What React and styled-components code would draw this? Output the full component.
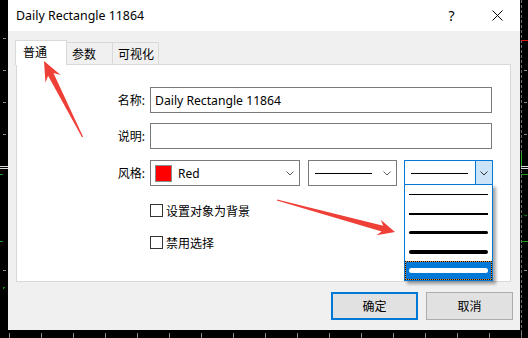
import React from 'react';
import styled, { createGlobalStyle } from 'styled-components';

const Global = createGlobalStyle`
  html, body { margin: 0; padding: 0; background: #000; }
  body {
    font-family: "Segoe UI", "Noto Sans", "Noto Sans CJK SC", sans-serif;
    font-size: 12px;
    color: #000;
  }
  #root { width: 528px; height: 338px; overflow: hidden; }
`;

const Page = styled.div`
  position: relative;
  width: 528px;
  height: 338px;
  display: grid;
  grid-template-columns: 8px 512px 8px;
  grid-template-rows: 330px 8px;
  background: #000;
  overflow: hidden;
`;

const Rail = styled.svg`
  display: block;
  grid-column: ${(p) => p.$col};
`;

const Dialog = styled.div`
  display: flex;
  flex-direction: column;
  background: #f0f0f0;
  overflow: hidden;
`;

const TitleBar = styled.div`
  height: 31px;
  flex: none;
  background: #fff;
  display: flex;
  align-items: center;
`;

const Title = styled.div`
  flex: 1;
  padding-left: 8px;
  font-size: 12.4px;
  white-space: nowrap;
`;

const TitleButton = styled.div`
  width: ${(p) => p.$w}px;
  height: 31px;
  display: flex;
  align-items: center;
  justify-content: center;
  font-size: 14px;
`;

const Body = styled.div`
  flex: 1;
  display: flex;
  flex-direction: column;
  padding-top: 9px;
`;

const TabStrip = styled.div`
  height: 24px;
  display: flex;
  align-items: flex-start;
  padding-left: 7px;
  position: relative;
  z-index: 2;
`;

const Tab = styled.div`
  box-sizing: border-box;
  width: ${(p) => p.$w}px;
  height: ${(p) => (p.$active ? 25 : 22)}px;
  margin-top: ${(p) => (p.$active ? 0 : 2)}px;
  margin-left: ${(p) => (p.$first ? 0 : -1)}px;
  border: 1px solid #d9d9d9;
  border-bottom: none;
  background: ${(p) => (p.$active ? '#fff' : '#f0f0f0')};
  padding-left: ${(p) => (p.$active ? 7 : 5)}px;
  padding-bottom: ${(p) => (p.$active ? 2 : 0)}px;
  display: flex;
  align-items: center;
  position: relative;
  z-index: ${(p) => (p.$active ? 2 : 1)};
  font-size: 12px;
`;

const Panel = styled.div`
  box-sizing: border-box;
  margin: 0 9px 0 8px;
  height: 218px;
  flex: none;
  border: 1px solid #d9d9d9;
  background: #fff;
  display: flex;
  flex-direction: column;
  position: relative;
  z-index: 1;
`;

const Row = styled.div`
  display: flex;
  align-items: center;
  height: ${(p) => p.$h}px;
  margin-top: ${(p) => p.$mt}px;
  flex: none;
`;

const Label = styled.div`
  width: 128px;
  margin-right: 5px;
  text-align: right;
  flex: none;
  font-size: 12px;
`;

const TextBox = styled.div`
  box-sizing: border-box;
  width: 342px;
  height: 100%;
  border: 1px solid #7a7a7a;
  padding-left: 4px;
  display: flex;
  align-items: center;
  background: #fff;
  white-space: nowrap;
  font-size: 12.2px;
`;

const Combos = styled.div`
  display: flex;
  height: 100%;
`;

const Combo = styled.div`
  box-sizing: border-box;
  width: ${(p) => p.$w}px;
  margin-left: ${(p) => p.$ml || 0}px;
  height: 100%;
  border: 1px solid ${(p) => (p.$focus ? '#0078d7' : '#7a7a7a')};
  background: #fff;
  display: flex;
  align-items: center;
  position: relative;
`;

const ComboValue = styled.div`
  flex: 1;
  display: flex;
  align-items: center;
  padding-left: ${(p) => p.$pl}px;
  height: 100%;
`;

const Swatch = styled.div`
  box-sizing: border-box;
  width: 17px;
  height: 17px;
  background: #ff0000;
  border: 1px solid #8c8c8c;
  margin-right: 6px;
`;

const LineSample = styled.div`
  width: 57px;
  height: 1px;
  background: #000;
`;

const ArrowCell = styled.div`
  width: ${(p) => p.$w}px;
  height: 100%;
  flex: none;
  display: flex;
  align-items: center;
  justify-content: center;
  background: ${(p) => (p.$open ? '#cce4f7' : 'transparent')};
  border-left: ${(p) => (p.$open ? '1px solid #0078d7' : 'none')};
  box-sizing: border-box;
`;

const DropList = styled.div`
  position: absolute;
  left: -1px;
  right: -1px;
  top: calc(100% - 1px);
  box-sizing: border-box;
  border: 1px solid #0078d7;
  background: #fff;
  box-shadow: 3px 3px 3px rgba(0, 0, 0, 0.35);
  z-index: 5;
  display: flex;
  flex-direction: column;
`;

const DropItem = styled.div`
  height: 19px;
  display: flex;
  align-items: center;
  padding: 0 4px;
  box-sizing: border-box;
  background: ${(p) => (p.$sel ? '#0078d7' : '#fff')};
  box-shadow: ${(p) => (p.$sel ? 'inset 0 0 0 1px #e8912c' : 'none')};
  outline: ${(p) => (p.$sel ? '1px dotted #111' : 'none')};
  outline-offset: -1px;
`;

const DropLine = styled.div`
  flex: 1;
  height: ${(p) => p.$t}px;
  border-radius: ${(p) => (p.$t > 2 ? p.$t / 2 : 0)}px;
  background: ${(p) => (p.$sel ? '#fff' : '#000')};
`;

const CheckRow = styled.label`
  display: flex;
  align-items: center;
  height: 13px;
  margin-top: ${(p) => p.$mt}px;
  margin-left: 133px;
  font-size: 12px;
  flex: none;
`;

const CheckBox = styled.span`
  box-sizing: border-box;
  width: 13px;
  height: 13px;
  border: 1px solid #333;
  background: #fff;
  margin-right: 3px;
  flex: none;
`;

const ButtonRow = styled.div`
  display: flex;
  justify-content: flex-end;
  gap: 8px;
  padding-right: 7px;
  margin-top: 10px;
`;

const Button = styled.div`
  box-sizing: border-box;
  width: 87px;
  height: 28px;
  background: #e1e1e1;
  border: ${(p) => (p.$primary ? '2px solid #0078d7' : '1px solid #adadad')};
  display: flex;
  align-items: center;
  justify-content: center;
  font-size: 12px;
`;

const Overlay = styled.svg`
  position: absolute;
  left: 0;
  top: 0;
  pointer-events: none;
  z-index: 20;
`;

const Chevron = ({ color = '#606060' }) => (
  <svg width="8" height="5" viewBox="0 0 8 5">
    <polyline points="0.5,0.5 4,4 7.5,0.5" fill="none" stroke={color} strokeWidth="1" />
  </svg>
);

function arrowPoints(tx, ty, px, py, hl, hw, nw, nb) {
  const dx = px - tx;
  const dy = py - ty;
  const L = Math.hypot(dx, dy);
  const ux = dx / L;
  const uy = dy / L;
  const nx = -uy;
  const ny = ux;
  const pt = (s, t) => `${(tx + ux * s + nx * t).toFixed(2)},${(ty + uy * s + ny * t).toFixed(2)}`;
  return [pt(0, 0.6), pt(L - nb, nw), pt(L - hl, hw), pt(L, 0), pt(L - hl, -hw), pt(L - nb, -nw), pt(0, -0.6)].join(' ');
}

const LeftRailArt = () => (
  <Rail $col="1" width="8" height="330" viewBox="0 0 8 330">
    {[38, 70, 102, 134, 270].map((y) => (
      <line key={y} x1="3" x2="6" y1={y + 0.5} y2={y + 0.5} stroke="#8a8a8a" />
    ))}
    <line x1="0" x2="8" y1="166.5" y2="166.5" stroke="#dcdcdc" />
    <line x1="0" x2="8" y1="168.5" y2="168.5" stroke="#dcdcdc" />
    <line x1="0" x2="3" y1="174.5" y2="174.5" stroke="#1d9a1d" />
    <line x1="0" x2="3" y1="241.5" y2="241.5" stroke="#1d9a1d" />
    <polyline points="3.5,289 3.5,287.5 5,287.5" fill="none" stroke="#1d9a1d" />
  </Rail>
);

const RightRailArt = () => (
  <Rail $col="3" width="8" height="330" viewBox="0 0 8 330">
    <line x1="1.5" x2="1.5" y1="0" y2="330" stroke="#6f6f6f" strokeDasharray="3 2" />
    {[70, 102, 134, 270].map((y) => (
      <line key={y} x1="4" x2="7" y1={y + 0.5} y2={y + 0.5} stroke="#8a8a8a" />
    ))}
    <line x1="1" x2="8" y1="40.5" y2="40.5" stroke="#e01010" />
    <line x1="1.5" x2="1.5" y1="153" y2="166" stroke="#1fae1f" />
    <line x1="1" x2="8" y1="166.5" y2="166.5" stroke="#dcdcdc" />
    <line x1="1" x2="8" y1="168.5" y2="168.5" stroke="#dcdcdc" />
    <line x1="1" x2="8" y1="174.5" y2="174.5" stroke="#1d9a1d" />
    <polyline points="4,214.5 5.5,216 7,215" fill="none" stroke="#1d9a1d" />
    <line x1="1" x2="8" y1="241.5" y2="241.5" stroke="#1d9a1d" />
  </Rail>
);

const BottomRailArt = () => {
  const xs = [];
  for (let x = 9; x < 528; x += 32) xs.push(x);
  return (
    <Rail $col="1 / 4" width="528" height="8" viewBox="0 0 528 8">
      {xs.map((x) => (
        <line key={x} x1={x + 0.5} x2={x + 0.5} y1="3" y2="8" stroke="#8a8a8a" />
      ))}
      <line x1="521.5" x2="521.5" y1="0" y2="8" stroke="#6f6f6f" strokeDasharray="3 2" />
    </Rail>
  );
};

export default function App() {
  const thickness = [1, 2, 3, 4, 5];
  return (
    <>
      <Global />
      <Page>
        <LeftRailArt />
        <Dialog>
          <TitleBar>
            <Title>Daily Rectangle 11864</Title>
            <TitleButton $w={45}>?</TitleButton>
            <TitleButton $w={46}>
              <svg width="11" height="11" viewBox="0 0 11 11">
                <line x1="0.5" y1="0.5" x2="10.5" y2="10.5" stroke="#000" strokeWidth="1" />
                <line x1="10.5" y1="0.5" x2="0.5" y2="10.5" stroke="#000" strokeWidth="1" />
              </svg>
            </TitleButton>
          </TitleBar>
          <Body>
            <TabStrip>
              <Tab $active $first $w={52}>普通</Tab>
              <Tab $w={47}>参数</Tab>
              <Tab $w={47}>可视化</Tab>
            </TabStrip>
            <Panel>
              <Row $mt={22} $h={26}>
                <Label>名称:</Label>
                <TextBox>Daily Rectangle 11864</TextBox>
              </Row>
              <Row $mt={10} $h={26}>
                <Label>说明:</Label>
                <TextBox />
              </Row>
              <Row $mt={11} $h={26}>
                <Label>风格:</Label>
                <Combos>
                  <Combo $w={150}>
                    <ComboValue $pl={4}>
                      <Swatch />
                      Red
                    </ComboValue>
                    <ArrowCell $w={18}>
                      <Chevron />
                    </ArrowCell>
                  </Combo>
                  <Combo $w={89} $ml={8}>
                    <ComboValue $pl={6}>
                      <LineSample />
                    </ComboValue>
                    <ArrowCell $w={18}>
                      <Chevron />
                    </ArrowCell>
                  </Combo>
                  <Combo $w={89} $ml={7} $focus>
                    <ComboValue $pl={6}>
                      <LineSample />
                    </ComboValue>
                    <ArrowCell $w={17} $open>
                      <Chevron color="#333" />
                    </ArrowCell>
                    <DropList>
                      {thickness.map((t, i) => (
                        <DropItem key={t} $sel={i === 4}>
                          <DropLine $t={t} $sel={i === 4} />
                        </DropItem>
                      ))}
                    </DropList>
                  </Combo>
                </Combos>
              </Row>
              <CheckRow $mt={18}>
                <CheckBox />
                设置对象为背景
              </CheckRow>
              <CheckRow $mt={19}>
                <CheckBox />
                禁用选择
              </CheckRow>
            </Panel>
            <ButtonRow>
              <Button $primary>确定</Button>
              <Button>取消</Button>
            </ButtonRow>
          </Body>
        </Dialog>
        <RightRailArt />
        <BottomRailArt />
        <Overlay width="528" height="338" viewBox="0 0 528 338">
          <polygon points={arrowPoints(82.5, 137, 44, 61, 20, 8.5, 3, 15)} fill="#ef4038" />
          <polygon points={arrowPoints(277, 200, 395, 232, 17, 8, 3, 13)} fill="#ef4038" />
        </Overlay>
      </Page>
    </>
  );
}
